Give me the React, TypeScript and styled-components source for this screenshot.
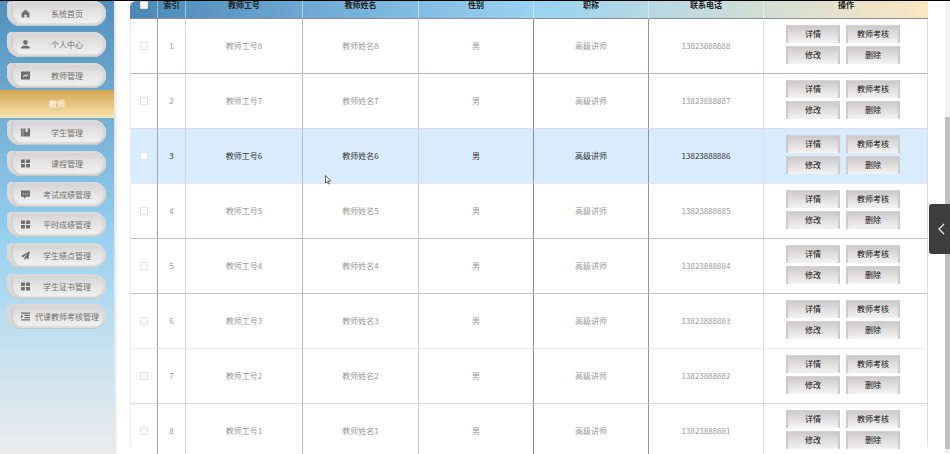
import React from "react";
import styled, { createGlobalStyle } from "styled-components";

const GlobalStyle = createGlobalStyle`
  * { box-sizing: border-box; }
  body {
    margin: 0;
    background: #fff;
    font-family: "Noto Sans CJK SC", "Noto Sans", sans-serif;
    font-size: 8px;
    line-height: 12px;
  }
  button, input { font: inherit; margin: 0; }
`;

const Page = styled.div`
  display: flex;
  height: 100vh;
  overflow: hidden;
  border-top: 1px solid #000;
`;

const Sidebar = styled.nav`
  flex: 0 0 114px;
  background: linear-gradient(180deg, #5090bc 0%, #98d2f1 53%, #c2e0f0 75%, #ececec 100%);
  box-shadow: 1px 0 4px rgba(0, 0, 0, 0.18);
`;

const MenuList = styled.ul`
  list-style: none;
  margin: 0;
  padding: 0 8px 0 7px;
`;

const MenuItem = styled.li`
  margin-bottom: 6px;
  &:nth-child(3n) { margin-bottom: 5px; }
  &:last-child { margin-bottom: 2px; }
`;

const MenuButton = styled.button`
  display: flex;
  align-items: center;
  width: 100%;
  height: 25px;
  padding: 0 2px 0 14px;
  border: 0;
  border-radius: 5px 13px 13px 14px;
  color: #707070;
  background: linear-gradient(180deg, #d2d0d1, #e6e5e5 50%, #f4f4f4);
  box-shadow: inset 0 -1px 0 #c6c6c4, inset 4px 0 1px #dadada, inset 6px 0 2px #d0d0d0,
    inset -3px 0 2px #d8d8d8, inset 0 -3px 1px #dddddb, inset 0 2px 1px #dedede;
`;

const MenuIcon = styled.svg`
  flex: 0 0 9px;
  width: 9px;
  height: 9px;
  fill: #6e6e6e;
`;

const MenuLabel = styled.span`
  flex: 1;
  text-align: center;
  white-space: nowrap;
`;

const ActiveLink = styled.a`
  display: block;
  margin-bottom: 2px;
  line-height: 28px;
  text-align: center;
  text-decoration: none;
  color: #fff;
  background: linear-gradient(180deg, #d3a552, #e6c47e 50%, #fae4b4);
`;

const Main = styled.main`
  flex: 1;
  min-width: 0;
  padding: 0 17px 0 16px;
`;

const TableFrame = styled.div`
  height: 100%;
  overflow: hidden;
  border-radius: 6px 0 10px 10px;
`;

const Table = styled.table`
  width: 100%;
  table-layout: fixed;
  border-collapse: separate;
  border-spacing: 0;
  text-align: center;
`;

const Col = styled.col<{ $w: number }>`
  width: ${(p) => p.$w}px;
`;

const HeadRow = styled.tr`
  background: linear-gradient(90deg, #4a88b7 0%, #98d2f2 50%, #fbe6c1 100%);
`;

const HeadCell = styled.th`
  height: 18px;
  padding: 0 0 9px;
  line-height: 8px;
  font-weight: 700;
  color: #222;
  border-right: 1px solid rgba(255, 255, 255, 0.45);
  border-bottom: 1px solid #8b8b9e;
  &:last-child { border-right: 0; }
`;

const Row = styled.tr<{ $hover: boolean }>`
  color: ${(p) => (p.$hover ? "#333" : "#999")};
  background: ${(p) => (p.$hover ? "#d9ebff" : "#fff")};
`;

const Cell = styled.td<{ $line: string; $rule: string }>`
  height: 55px;
  padding: 0;
  border-right: 1px solid ${(p) => p.$line};
  border-bottom: 1px solid ${(p) => p.$rule};
  &:first-child { border-left: 1px solid #e8e8ee; }
`;

const Check = styled.input`
  appearance: none;
  display: block;
  width: 8px;
  height: 8px;
  margin: 0 auto;
  border: 1px solid #dcdfe6;
  border-radius: 1px;
  background: #fff;
`;

const Actions = styled.div`
  display: grid;
  grid-template-columns: 54px 54px;
  justify-content: center;
  gap: 3px 6px;
  padding: 0 5px 3px 0;
`;

const ActionButton = styled.button`
  height: 18px;
  padding: 0;
  border: 0;
  color: #111;
  background: linear-gradient(180deg, #c9c6c7, #dddbdb 45%, #f4f3f3);
  box-shadow: inset 3px 0 1px -1px #cbcbcb, inset -3px 0 1px -1px #cbcbcb, inset 0 1px 0 #d4d4d4;
`;

const ScrollTrack = styled.div`
  flex: 0 0 5px;
  display: flex;
  flex-direction: column;
  justify-content: flex-end;
  padding-bottom: 5px;
  background: #f1f1f1;
`;

const ScrollThumb = styled.div`
  height: 74%;
  background: #c1c1c1;
`;

const Drawer = styled.button`
  position: fixed;
  right: 0;
  top: 204px;
  display: flex;
  align-items: center;
  justify-content: flex-end;
  width: 21px;
  height: 50px;
  padding: 0 5px 0 0;
  border: 0;
  border-radius: 3px 0 0 3px;
  background: #3d3d3d;
`;

const Pointer = styled.svg`
  position: fixed;
  left: 325px;
  top: 175px;
`;

const icons: Record<string, React.ReactNode> = {
  home: <path d="M8 1 1 7v8h5v-5h4v5h5V7z" />,
  user: <path d="M8 0a4 4 0 0 1 4 4c0 2.500-1.500 4.500-4 4.500S4 6.500 4 4a4 4 0 0 1 4-4zM0 15c0-4 3-5 8-5s8 1 8 5z" />,
  chart: <path fillRule="evenodd" d="M0 1h16v14H0zM3 10l1 1.500 3-3 2 2 4-4-1-1.500-3 3-2-2z" />,
  book: <path d="M0 1h3v14H0zM4 1h4v7l2-1.500L12 8V1h4v14H4z" />,
  grid: <path d="M0 1h7v6H0zM9 1h7v6H9zM0 9h7v6H0zM9 9h7v6H9z" />,
  chat: <path fillRule="evenodd" d="M0 1h16v11H9l-4 4v-4H0zM3 6v2h2V6zM7 6v2h2V6zM11 6v2h2V6z" />,
  plane: <path d="M16 0 0 9l4 2 9-8-7 9v4l3-3 4 2z" />,
  list: <path d="M0 1h16v2H0zM6 5h10v2H6zM6 9h10v2H6zM0 13h16v2H0zM0 5l4 3-4 3z" />,
};

const Entry = ({ icon, label }: { icon: string; label: string }) => (
  <MenuItem>
    <MenuButton type="button">
      <MenuIcon viewBox="0 0 16 16" aria-hidden="true">{icons[icon]}</MenuIcon>
      <MenuLabel>{label}</MenuLabel>
    </MenuButton>
  </MenuItem>
);

const upper = [
  ["home", "系统首页"],
  ["user", "个人中心"],
  ["chart", "教师管理"],
];

const lower = [
  ["book", "学生管理"],
  ["grid", "课程管理"],
  ["chat", "考试成绩管理"],
  ["grid", "平时成绩管理"],
  ["plane", "学生绩点管理"],
  ["grid", "学生证书管理"],
  ["list", "代课教师考核管理"],
];

const widths = [28, 28, 117, 116, 115, 115, 115, 164];
const lines = ["#a3a3b2", "#d5d5de", "#b9b9c6", "#cfcfd8", "#8e8e9c", "#9494a2", "#dedee6", "#dedee6"];
const rules = ["#b2b2c6", "#d8dfea", "#e3e8f0", "#c0c0cc", "#c4c4d0", "#e8e8f2", "#d8d8e4", "#d8d8e4"];
const headings = ["索引", "教师工号", "教师姓名", "性别", "职称", "联系电话", "操作"];
const actions = ["详情", "教师考核", "修改", "删除"];
const rows = [8, 7, 6, 5, 4, 3, 2, 1].map((n, i) => ({
  n,
  rule: rules[i],
  cells: [`${i + 1}`, `教师工号${n}`, `教师姓名${n}`, "男", "高级讲师", `1382388888${n}`],
}));

export default function App() {
  return (
    <>
      <GlobalStyle />
      <Page>
        <Sidebar>
          <MenuList>
            {upper.map(([icon, label]) => <Entry key={label} icon={icon} label={label} />)}
          </MenuList>
          <ActiveLink href="#teachers">教师</ActiveLink>
          <MenuList>
            {lower.map(([icon, label]) => <Entry key={label} icon={icon} label={label} />)}
          </MenuList>
        </Sidebar>
        <Main>
          <TableFrame>
            <Table>
              <colgroup>
                {widths.map((w, i) => <Col key={i} $w={w} />)}
              </colgroup>
              <thead>
                <HeadRow>
                  <HeadCell><Check type="checkbox" aria-label="全选" /></HeadCell>
                  {headings.map((h) => <HeadCell key={h}>{h}</HeadCell>)}
                </HeadRow>
              </thead>
              <tbody>
                {rows.map((row) => (
                  <Row key={row.n} $hover={row.n === 6}>
                    <Cell $line={lines[0]} $rule={row.rule}>
                      <Check type="checkbox" aria-label={row.cells[1]} />
                    </Cell>
                    {row.cells.map((text, i) => (
                      <Cell key={i} $line={lines[i + 1]} $rule={row.rule}>{text}</Cell>
                    ))}
                    <Cell $line={lines[7]} $rule={row.rule}>
                      <Actions>
                        {actions.map((a) => <ActionButton key={a} type="button">{a}</ActionButton>)}
                      </Actions>
                    </Cell>
                  </Row>
                ))}
              </tbody>
            </Table>
          </TableFrame>
        </Main>
        <ScrollTrack>
          <ScrollThumb />
        </ScrollTrack>
      </Page>
      <Drawer type="button" aria-label="展开">
        <svg width="7" height="12" viewBox="0 0 7 12" fill="none" stroke="#eee" strokeWidth="1.2">
          <path d="M6 1 1 6l5 5" />
        </svg>
      </Drawer>
      <Pointer width="7" height="10" viewBox="0 0 7 10" aria-hidden="true">
        <path d="M.5.500v7.500l1.700-1.500 1.200 2.500 1-.500L3.300 6h2.400z" fill="#fff" stroke="#444" strokeWidth=".8" />
      </Pointer>
    </>
  );
}
